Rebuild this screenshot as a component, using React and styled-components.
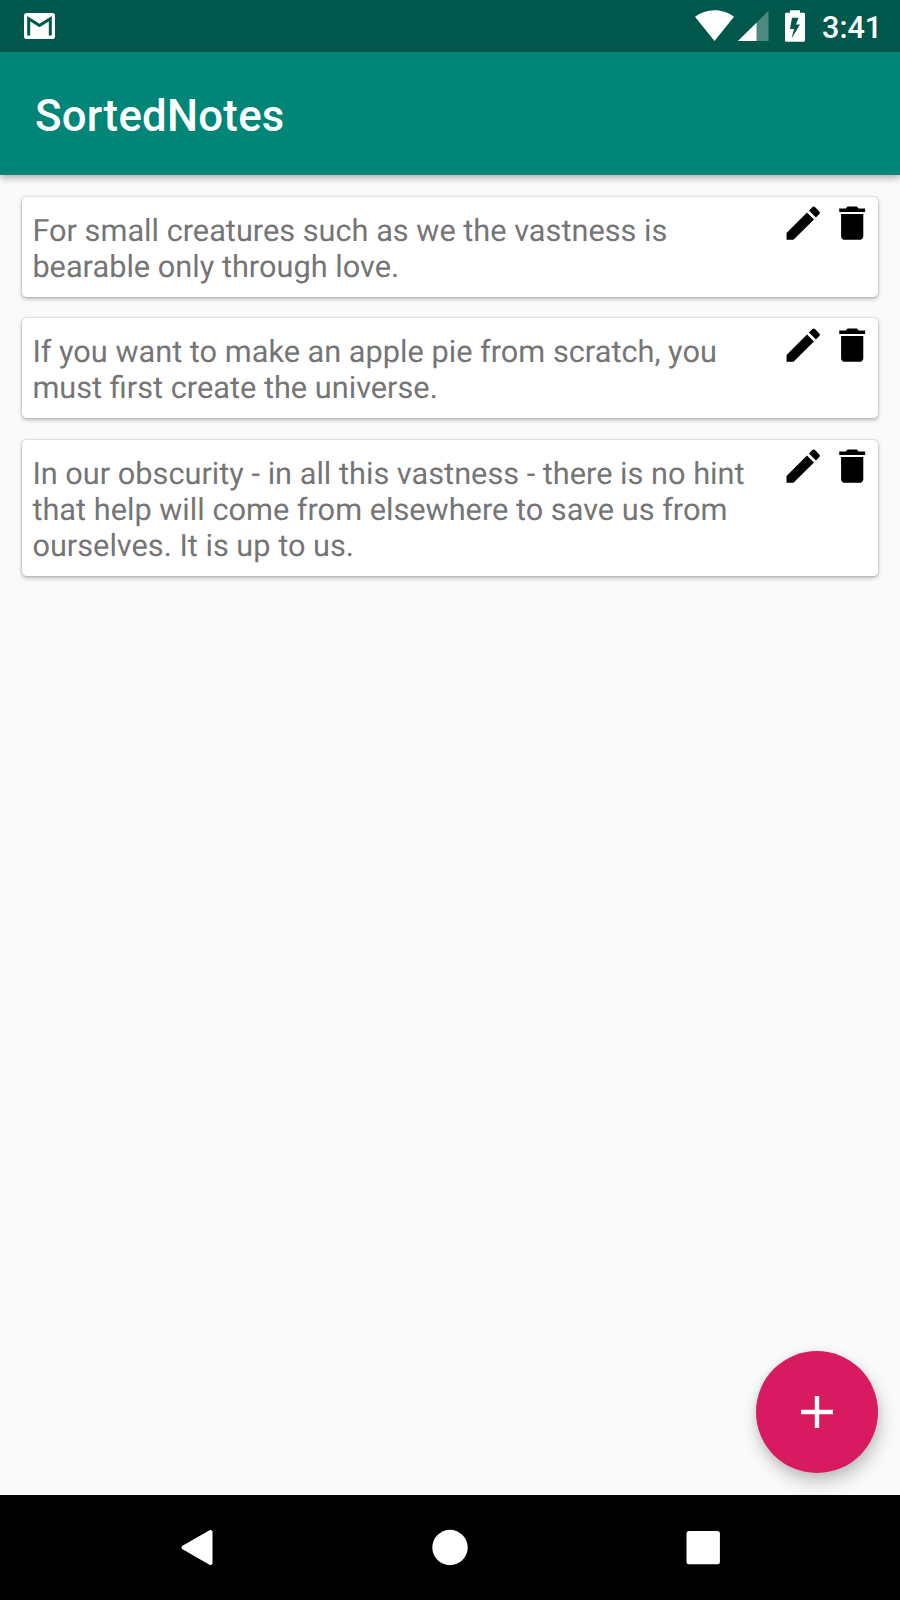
import React from "react";
import styled, { createGlobalStyle } from "styled-components";

const GlobalStyle = createGlobalStyle`
  *, *::before, *::after { box-sizing: border-box; }
  body { margin: 0; background: #fafafa; font-family: Roboto, "Liberation Sans", sans-serif; }
  button { border: 0; padding: 0; background: none; font: inherit; }
  svg { display: block; }
`;

const Screen = styled.div`
  position: relative;
  display: flex;
  flex-direction: column;
  width: 900px;
  height: 1600px;
  overflow: hidden;
  background: #fafafa;
`;

const StatusBar = styled.header`
  display: flex;
  justify-content: space-between;
  height: 52px;
  padding: 0 20px 0 24px;
  background: #00574b;
  color: #fff;
`;

const Notifications = styled.div`
  padding-top: 13.3px;
`;

const SystemIcons = styled.div`
  display: flex;
  align-items: flex-start;
  padding-top: 10px;
`;

const SystemIcon = styled.svg`
  flex: none;
  width: ${(p) => p.$w}px;
  height: 32px;
  margin-right: ${(p) => p.$gap}px;
`;

const Clock = styled.time`
  width: 58px;
  font-size: 30.6px;
  font-weight: 500;
  line-height: 36px;
  white-space: nowrap;
`;

const AppBar = styled.div`
  z-index: 1;
  display: flex;
  align-items: center;
  height: 123px;
  padding: 5px 35px 0;
  background: #008577;
  box-shadow: 0 3px 7px rgba(0, 0, 0, 0.3);
`;

const Title = styled.h1`
  margin: 0;
  color: #fff;
  font-size: 43.75px;
  font-weight: 500;
  line-height: 52px;
  letter-spacing: 0.25px;
`;

const NoteList = styled.main`
  display: flex;
  flex: 1;
  flex-direction: column;
  gap: 21.7px;
  padding: 21.7px 21.7px;
`;

const Card = styled.article`
  display: flex;
  justify-content: space-between;
  padding: 16px 4.3px 12px 10.7px;
  border-radius: 4.4px;
  background: #fff;
  box-shadow: 0 0 2px rgba(0, 0, 0, 0.28), 0 2px 4px rgba(0, 0, 0, 0.26);
`;

const NoteText = styled.p`
  width: 727px;
  margin: 0;
  color: #757575;
  font-size: 30.72px;
  line-height: 36px;
  text-rendering: geometricPrecision;
`;

const Actions = styled.div`
  display: flex;
  gap: 4px;
  height: 44.4px;
  margin-top: -11.7px;
`;

const IconButton = styled.button`
  width: 44.4px;
  height: 44.4px;
`;

const Fab = styled.button`
  position: absolute;
  right: 22px;
  bottom: 127px;
  display: grid;
  place-items: center;
  width: 122px;
  height: 122px;
  border-radius: 50%;
  background: #d81b60;
  box-shadow: 2px 9px 17px rgba(0, 0, 0, 0.22), 0 2px 8px rgba(0, 0, 0, 0.07);
`;

const NavBar = styled.nav`
  z-index: 1;
  display: flex;
  align-items: center;
  justify-content: space-between;
  height: 105px;
  padding: 0 176px;
  background: #000;
`;

const NavButton = styled.button`
  width: 42px;
  height: 42px;
`;

const notes = [
  "For small creatures such as we the vastness is bearable only through love.",
  "If you want to make an apple pie from scratch, you must first create the universe.",
  "In our obscurity - in all this vastness - there is no hint that help will come from elsewhere to save us from ourselves. It is up to us.",
];

function MailIcon() {
  return (
    <svg width="31" height="26" viewBox="0 0 31 26">
      <rect width="31" height="26" rx="2.8" fill="#fff" />
      <path d="M4.7 22.5V5.8L15.5 12.6L26.3 5.8V22.5" fill="none" stroke="#00574b" strokeWidth="3" />
    </svg>
  );
}

function EditIcon() {
  return (
    <svg width="44.4" height="44.4" viewBox="0 0 24 24">
      <path d="M3 17.25V21h3.75L17.81 9.94l-3.75-3.75L3 17.25zM20.71 7.04c.39-.39.39-1.02 0-1.41l-2.34-2.34a.996.996 0 0 0-1.41 0l-1.83 1.83 3.75 3.75 1.83-1.83z" />
    </svg>
  );
}

function DeleteIcon() {
  return (
    <svg width="44.4" height="44.4" viewBox="0 0 24 24">
      <path d="M6 19c0 1.1.9 2 2 2h8c1.1 0 2-.9 2-2V7H6v12zM19 4h-3.5l-1-1h-5l-1 1H5v2h14V4z" />
    </svg>
  );
}

function Note({ text }) {
  return (
    <Card>
      <NoteText>{text}</NoteText>
      <Actions>
        <IconButton aria-label="Edit note"><EditIcon /></IconButton>
        <IconButton aria-label="Delete note"><DeleteIcon /></IconButton>
      </Actions>
    </Card>
  );
}

export default function App() {
  return (
    <Screen>
      <GlobalStyle />
      <StatusBar>
        <Notifications><MailIcon /></Notifications>
        <SystemIcons>
          <SystemIcon $w={39} $gap={3.5} viewBox="0 0 39 32">
            <path d="M0 6.7C5.5 2.6 12.2.3 19.5.3S33.5 2.6 39 6.7L19.5 31z" fill="#fff" />
          </SystemIcon>
          <SystemIcon $w={31} $gap={16.6} viewBox="0 0 31 32">
            <path d="M0 31L30.5.8V31z" fill="#fff" fillOpacity=".3" />
            <path d="M0 31L18.5 12.7V31z" fill="#fff" />
          </SystemIcon>
          <SystemIcon $w={20} $gap={16.9} viewBox="0 0 20 32">
            <path
              fillRule="evenodd"
              d="M1.3 2.7H5V.3H15V2.7H18.7Q20 2.7 20 4V30.4Q20 31.7 18.7 31.7H1.3Q0 31.7 0 30.4V4Q0 2.7 1.3 2.7zM7 7.7L5 19H9L6.5 28.5L15 14.5H11L13.5 7.7z"
              fill="#fff"
            />
          </SystemIcon>
          <Clock>3:41</Clock>
        </SystemIcons>
      </StatusBar>
      <AppBar><Title>SortedNotes</Title></AppBar>
      <NoteList>
        {notes.map((text) => <Note key={text} text={text} />)}
      </NoteList>
      <Fab aria-label="Add note">
        <svg width="32" height="32" viewBox="0 0 32 32">
          <path d="M0 16H32M16 0V32" stroke="#fff" strokeWidth="4.4" />
        </svg>
      </Fab>
      <NavBar>
        <NavButton aria-label="Back">
          <svg width="42" height="42" viewBox="0 0 42 42">
            <path d="M7.5 20.5L34.5 5V36z" fill="#fff" stroke="#fff" strokeWidth="4" strokeLinejoin="round" />
          </svg>
        </NavButton>
        <NavButton aria-label="Home">
          <svg width="42" height="42" viewBox="0 0 42 42"><circle cx="21" cy="20.5" r="17.7" fill="#fff" /></svg>
        </NavButton>
        <NavButton aria-label="Recent apps">
          <svg width="42" height="42" viewBox="0 0 42 42"><rect x="4.5" y="3.9" width="33.4" height="33.4" rx="2.5" fill="#fff" /></svg>
        </NavButton>
      </NavBar>
    </Screen>
  );
}
